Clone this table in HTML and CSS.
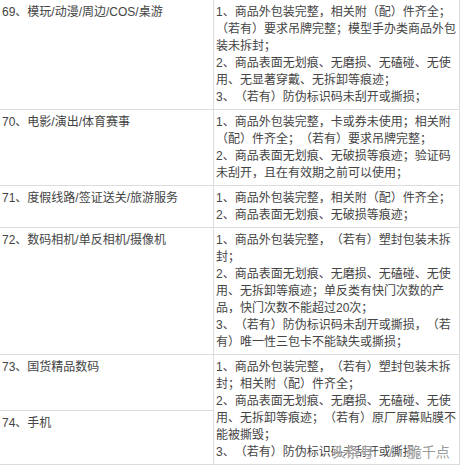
FILE: index.html
```html
<!DOCTYPE html>
<html lang="zh-CN">
<head>
<meta charset="utf-8">
<title>商品验收标准</title>
<link rel="stylesheet" href="styles.css">
</head>
<body>
<div class="table">
  <div class="cell name">69、模玩/动漫/周边/COS/桌游</div>
  <div class="cell desc">1、商品外包装完整，相关附（配）件齐全；（若有）要求吊牌完整；模型手办类商品外包装未拆封；<br>2、商品表面无划痕、无磨损、无磕碰、无使用、无显著穿戴、无拆卸等痕迹；<br>3、（若有）防伪标识码未刮开或撕损；</div>

  <div class="cell name">70、电影/演出/体育赛事</div>
  <div class="cell desc">1、商品外包装完整，卡或券未使用；相关附（配）件齐全；（若有）要求吊牌完整；<br>2、商品表面无划痕、无破损等痕迹；验证码未刮开，且在有效期之前可以使用；</div>

  <div class="cell name">71、度假线路/签证送关/旅游服务</div>
  <div class="cell desc">1、商品外包装完整，相关附（配）件齐全；<br>2、商品表面无划痕、无破损等痕迹；</div>

  <div class="cell name">72、数码相机/单反相机/摄像机</div>
  <div class="cell desc">1、商品外包装完整，（若有）塑封包装未拆封；<br>2、商品表面无划痕、无磨损、无磕碰、无使用、无拆卸等痕迹；单反类有快门次数的产品，快门次数不能超过20次；<br>3、（若有）防伪标识码未刮开或撕损，（若有）唯一性三包卡不能缺失或撕损；</div>

  <div class="cell name">73、国货精品数码</div>
  <div class="cell desc span2">1、商品外包装完整，（若有）塑封包装未拆封；相关附（配）件齐全；<br>2、商品表面无划痕、无磨损、无磕碰、无使用、无拆卸等痕迹；（若有）原厂屏幕贴膜不能被撕毁；<br>3、（若有）防伪标识码未刮开或撕损；<span class="watermark">头条号 / 脆千点</span></div>

  <div class="cell name">74、手机</div>
</div>
</body>
</html>
```
FILE: styles.css
```css
html, body {
  margin: 0;
  padding: 0;
  background: #fff;
  overflow: hidden;
}

.table {
  display: grid;
  grid-template-columns: 213px 245px;
  grid-template-rows: auto auto auto auto 55px auto;
  gap: 1px;
  padding: 1px;
  background: #dcdcdc;
  margin: -1px 0 0 -1px;
  width: max-content;
  font-family: "Liberation Sans", "Noto Sans CJK SC", sans-serif;
  font-size: 12px;
  line-height: 17px;
  color: #444;
  text-spacing-trim: space-all;
}

.cell {
  background: #fff;
  padding: 4px 2px 3px 2px;
}

.desc {
  position: relative;
  word-break: break-all;
}

.span2 {
  grid-column: 2;
  grid-row: 5 / span 2;
}

.watermark {
  position: absolute;
  left: 118px;
  bottom: 3px;
  font-size: 14px;
  line-height: 18px;
  word-spacing: 11px;
  color: rgba(140, 140, 140, 0.9);
  text-shadow: 0 0 1px #fff, 0 0 2px #fff;
  white-space: nowrap;
}
```
